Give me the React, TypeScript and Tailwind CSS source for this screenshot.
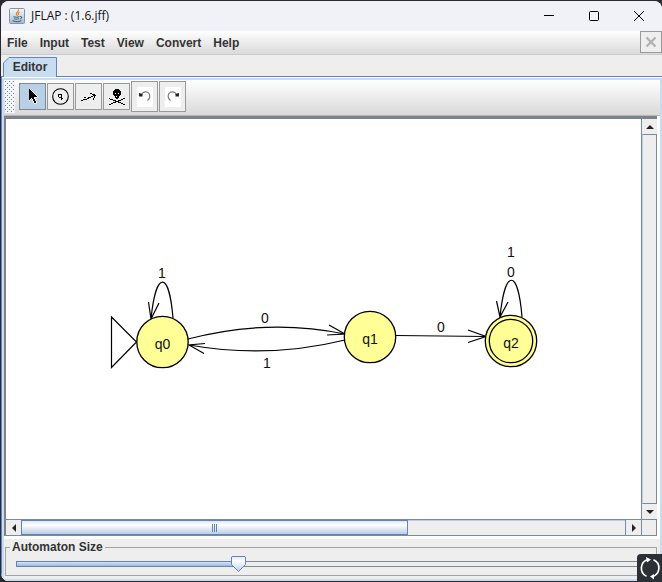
import { useState } from "react";
import type { ReactNode } from "react";

const MENUS = ["File", "Input", "Test", "View", "Convert", "Help"];

function PixelArt({ rows }: { rows: string[] }) {
  const width = Math.max(...rows.map((r) => r.length));
  return (
    <svg
      width={width}
      height={rows.length}
      viewBox={`0 0 ${width} ${rows.length}`}
      shapeRendering="crispEdges"
      aria-hidden="true"
    >
      {rows.flatMap((row, y) =>
        [...row].map((c, x) =>
          c === "." ? null : (
            <rect key={`${x}-${y}`} x={x} y={y} width={1} height={1} fill={c === "w" ? "#fff" : "#000"} />
          ),
        ),
      )}
    </svg>
  );
}

const CURSOR = [
  "..#w.......",
  "..##w......",
  "..###w.....",
  "..####w....",
  "..#####w...",
  "..######w..",
  "..#######w.",
  "..########w",
  "..#####www.",
  "..##w##w...",
  "..#w.w##w..",
  "..w..w##w..",
  "......w##w.",
  "......w##w.",
  ".......ww..",
];

const ARROW = [
  ".........##....",
  "...........###.",
  "............###",
  "..........##.#.",
  "...##..###...#.",
  "......##....#..",
  "..####......#..",
  "##.............",
];

const SKULL = [
  "......####......",
  ".....######.....",
  "....########....",
  "....########....",
  "....##.##.##....",
  "....########....",
  ".....######.....",
  "......#.##......",
  "......####......",
  "#......##.....##",
  ".###........##..",
  "....###..###....",
  "......####......",
  "....###..###....",
  "..##........##..",
  "##............##",
];

function ToolButton({ label, active = false, tall = false, children }: { label: string; active?: boolean; tall?: boolean; children: ReactNode }) {
  return (
    <button
      type="button"
      aria-label={label}
      aria-pressed={active}
      className={`flex w-[27px] items-center justify-center border ${tall ? "h-[31px]" : "h-[27px]"} ${
        active ? "border-[#7a8a99] bg-[#b8cfe5]" : "border-[#999999] bg-[#eeeeee]"
      }`}
    >
      {children}
    </button>
  );
}

function TurnIcon({ flip = false }: { flip?: boolean }) {
  return (
    <svg width="16" height="20" viewBox="0 0 16 20" className={flip ? "-scale-x-100" : ""} aria-hidden="true">
      <rect width="16" height="20" fill="#fff" />
      <path d="M4.500 7.500C6 4.500 10 4 12 6.500C13.500 9 13 11.500 10.500 13.500" fill="none" stroke="#777" strokeWidth="1.200" />
      <path d="M2 6L5.500 7V9.500H2z" fill="#222" />
    </svg>
  );
}

function TitleBar() {
  return (
    <header className="flex h-[30px] shrink-0 items-center bg-[#f1f2f8] pl-2">
      <svg width="16" height="16" viewBox="0 0 16 16" aria-hidden="true">
        <defs>
          <linearGradient id="cupTile" x1="0" y1="0" x2="0" y2="1">
            <stop offset="0" stopColor="#f6f8fa" />
            <stop offset="1" stopColor="#a9bac8" />
          </linearGradient>
        </defs>
        <rect x="0.5" y="0.5" width="15" height="15" rx="1" fill="url(#cupTile)" stroke="#8095a8" />
        <path d="M9.500 1.500C10 3.500 6.500 4.500 7.500 6.500L8.500 8M10.500 4C8.500 5 9 6 9.500 7" fill="none" stroke="#e8812c" strokeWidth="1.200" />
        <path d="M4.500 8.500C6 9.300 9 9.300 10.500 8.500M5 10.500C6.500 11.300 8.500 11.300 10 10.500M11 8.500C13.500 8 13 10.500 11 11M3.500 12.500C6 14 10.500 14 12.500 12.500" fill="none" stroke="#4d7596" strokeWidth="1.100" />
      </svg>
      <h1 className="ml-1.5 flex-1 font-['Open_Sans','Noto_Sans',sans-serif] text-[12px] leading-4 text-[#111]">JFLAP : (1.6.jff)</h1>
      <button type="button" aria-label="Minimize" className="flex h-full w-[45px] items-center justify-center">
        <svg width="10" height="10" aria-hidden="true"><path d="M0 4.500H10" stroke="#000" /></svg>
      </button>
      <button type="button" aria-label="Maximize" className="flex h-full w-[45px] items-center justify-center">
        <svg width="10" height="10" aria-hidden="true"><rect x="0.5" y="0.5" width="9" height="9" rx="1" fill="none" stroke="#000" /></svg>
      </button>
      <button type="button" aria-label="Close" className="flex h-full w-[46px] items-center justify-center">
        <svg width="10" height="10" aria-hidden="true"><path d="M0 0L10 10M10 0L0 10" stroke="#000" /></svg>
      </button>
    </header>
  );
}

function MenuBar() {
  return (
    <div className="flex h-6 shrink-0 items-start justify-between border-b border-[#cccccc] bg-linear-to-b from-white to-[#dadada]">
      <nav className="flex gap-3 pl-1.5">
        {MENUS.map((m) => (
          <button key={m} type="button" className="h-[23px] font-bold">{m}</button>
        ))}
      </nav>
      <button type="button" aria-label="Close tab" disabled className="flex h-[22px] w-[22px] items-center justify-center border border-[#999999] bg-[#eeeeee]">
        <svg width="12" height="12" aria-hidden="true"><path d="M1.500 1.500L10.500 10.500M10.500 1.500L1.500 10.500" stroke="#b0b0b0" strokeWidth="2.200" /></svg>
      </button>
    </div>
  );
}

function Toolbar() {
  return (
    <div role="toolbar" aria-label="Tools" className="flex h-[35px] shrink-0 items-center gap-px bg-linear-to-b from-white to-[#d9d9d9] pb-0.5">
      <svg className="mr-[3px] ml-px" width="10" height="32" shapeRendering="crispEdges" aria-hidden="true">
        <defs>
          <pattern id="grip" width="4" height="4" patternUnits="userSpaceOnUse">
            <rect width="4" height="4" fill="#f4f6f8" />
            <rect width="1" height="1" fill="#6f8296" />
            <rect x="2" y="2" width="1" height="1" fill="#6f8296" />
          </pattern>
        </defs>
        <rect width="10" height="32" fill="url(#grip)" />
      </svg>
      <ToolButton label="Attribute editor" active>
        <PixelArt rows={CURSOR} />
      </ToolButton>
      <ToolButton label="State creator">
        <svg width="17" height="17" viewBox="0 0 17 17" aria-hidden="true">
          <circle cx="8.500" cy="8.500" r="7.800" fill="none" stroke="#000" strokeWidth="1.100" />
          <path d="M6 6h4v1h-4zM6 7h1v2h-1zM9 7h1v5h-1zM7 9h2v1h-2zM10 10h1v1h-1z" fill="#000" shapeRendering="crispEdges" />
        </svg>
      </ToolButton>
      <ToolButton label="Transition creator">
        <PixelArt rows={ARROW} />
      </ToolButton>
      <ToolButton label="Deleter">
        <PixelArt rows={SKULL} />
      </ToolButton>
      <ToolButton label="Undo" tall><TurnIcon /></ToolButton>
      <ToolButton label="Redo" tall><TurnIcon flip /></ToolButton>
    </div>
  );
}

function StateNode({ x, y, name, final = false }: { x: number; y: number; name: string; final?: boolean }) {
  return (
    <g>
      <circle cx={x} cy={y} r="25.700" fill="#ffff96" stroke="#000" strokeWidth="1.300" />
      {final && <circle cx={x} cy={y} r="21.700" fill="none" stroke="#000" strokeWidth="1.300" />}
      <text x={x} y={y + 7} textAnchor="middle">{name}</text>
    </g>
  );
}

function Automaton() {
  return (
    <svg className="h-full w-full fill-[#111] font-['Liberation_Sans',Arial,sans-serif] text-[14px]" role="img" aria-label="State diagram">
      <g fill="none" stroke="#000" strokeWidth="1.200">
        <path d="M105.500 198V248.500L130.500 223Z" />
        <path d="M167 199C163 151 150 151 145 200M142.500 183L145 200L153 184" />
        <path d="M182 220Q262 199 339 215M323 206L339 215L321 216" />
        <path d="M339 221Q262 240 183 226M199 224.500L183 226L198 234.500" />
        <path d="M390 216.500L480 217.500M462 211L480 217.500L462 223.500" />
        <path d="M516 198C512 149 499 149 494 198M490.500 182L494 198L502 183" />
      </g>
      <StateNode x={156.5} y={223} name="q0" />
      <StateNode x={364} y={218} name="q1" />
      <StateNode x={505} y={222} name="q2" final />
      <g textAnchor="middle">
        <text x="156" y="159">1</text>
        <text x="259" y="204">0</text>
        <text x="261" y="249">1</text>
        <text x="435" y="213">0</text>
        <text x="505" y="138">1</text>
        <text x="505" y="158">0</text>
      </g>
    </svg>
  );
}

function ScrollArrow({ label, points }: { label: string; points: string }) {
  return (
    <button type="button" aria-label={label} className="flex size-[15px] shrink-0 items-center justify-center bg-[#eeeeee]">
      <svg width="8" height="8" aria-hidden="true"><polygon points={points} fill="#222" /></svg>
    </button>
  );
}

function Workspace() {
  return (
    <div className="mr-[3px] mb-[3px] grid min-h-0 flex-1 grid-cols-[1fr_15px] grid-rows-[1fr_16px] border-t-[3px] border-r border-b border-l-2 border-t-[#7b828a] border-r-[#7a8a99] border-b-[#7a8a99] border-l-[#7d8288]">
      <div className="min-h-0 overflow-hidden bg-white"><Automaton /></div>
      <div className="flex flex-col border-l border-[#7a8a99] bg-[#eeeeee]">
        <ScrollArrow label="Scroll up" points="0,6 4,2 8,6" />
        <div className="flex-1 border-y border-l border-y-[#7a8a99] border-l-[#b8cfe5]" />
        <ScrollArrow label="Scroll down" points="0,2 8,2 4,6" />
      </div>
      <div className="flex border-t border-[#7a8a99] bg-[#eeeeee]">
        <ScrollArrow label="Scroll left" points="6,0 2,4 6,8" />
        <div className="flex flex-1 border-r border-[#7a8a99] shadow-[inset_0_1px_0_#b8cfe5]">
          <div className="flex w-[64%] items-center justify-center gap-px border border-[#6382bf] bg-linear-to-b from-[#dce8f4] via-white via-30% to-[#b8cfe5]">
            <span className="h-2 w-px bg-[#6382bf]" />
            <span className="h-2 w-px bg-[#6382bf]" />
            <span className="h-2 w-px bg-[#6382bf]" />
          </div>
        </div>
        <ScrollArrow label="Scroll right" points="2,0 6,4 2,8" />
      </div>
      <div className="border-t border-l border-[#7a8a99] bg-[#eeeeee]" />
    </div>
  );
}

function SizePanel() {
  const [value, setValue] = useState(35);
  return (
    <div className="shrink-0 bg-[#eeeeee] pr-[3px] pb-[3px] pl-px">
      <fieldset className="h-[37px] border border-[#a3a3a3] pr-1.5 pl-2.5">
        <legend className="-ml-1.5 px-0.5 leading-4 font-bold">
          <label htmlFor="automaton-size">Automaton Size</label>
        </legend>
        <div className="relative h-4">
          <div className="absolute inset-x-0 top-1.5 h-1.5 border border-[#7a8a99] bg-[#eeeeee]" />
          <div
            className="absolute top-1.5 left-0 h-1.5 border border-[#6382bf] bg-linear-to-b from-[#d6e4f2] to-[#9db9da]"
            style={{ width: `${value}%` }}
          />
          <svg className="absolute top-px -ml-[7px]" style={{ left: `${value}%` }} width="15" height="16" aria-hidden="true">
            <defs>
              <linearGradient id="thumbFill" x1="0" y1="0" x2="0" y2="1">
                <stop offset="0" stopColor="#dce8f4" />
                <stop offset="0.3" stopColor="#fff" />
                <stop offset="1" stopColor="#b8cfe5" />
              </linearGradient>
            </defs>
            <path d="M1 0.500H14L14.500 1V8.500L7.500 15.500L0.500 8.500V1Z" fill="url(#thumbFill)" stroke="#6382bf" />
          </svg>
          <input
            id="automaton-size"
            type="range"
            min={0}
            max={100}
            value={value}
            onChange={(e) => setValue(Number(e.target.value))}
            className="absolute inset-0 h-full w-full opacity-0"
          />
        </div>
      </fieldset>
    </div>
  );
}

export default function App() {
  return (
    <div className="relative h-screen min-h-80 overflow-hidden bg-[#2a2b31] py-px pl-px font-['Liberation_Sans',Arial,sans-serif] text-[12px] text-[#333333]">
      <div className="flex h-full flex-col overflow-hidden rounded-lg bg-[#eeeeee]">
        <TitleBar />
        <MenuBar />
        <div role="tablist" className="flex h-[21px] shrink-0 items-end pl-0.5">
          <button type="button" role="tab" aria-selected="true" className="relative z-10 h-[19px] w-[54px] font-bold">
            <svg className="absolute inset-0 -z-10" width="54" height="20" aria-hidden="true">
              <path d="M0.500 20V6L6 0.500H53.500V20" fill="#c8ddf2" stroke="#6382bf" />
            </svg>
            Editor
          </button>
        </div>
        <main className="flex min-h-0 flex-1 flex-col border-t border-l border-[#6382bf] bg-white pt-px">
          <div className="flex min-h-0 flex-1 flex-col border-2 border-[#c8ddf2] bg-white">
            <Toolbar />
            <div className="h-px shrink-0 bg-[#b5b5b5]" />
            <Workspace />
            <SizePanel />
          </div>
        </main>
      </div>
      <button type="button" aria-label="Refresh" className="absolute right-0 bottom-0 flex h-7 w-[25px] items-center justify-center rounded-tl bg-[#2b2f36]">
        <svg width="22" height="24" viewBox="0 0 22 24" fill="none" aria-hidden="true">
          <path d="M9 3.500A9 9 0 0 0 7.500 20.300M13 20.700A9 9 0 0 0 14.500 3.700" stroke="#fff" strokeWidth="1.700" />
          <path d="M7 1L12 3.500L8 6.500ZM15 18L11 20.500L15 23.500Z" fill="#fff" />
        </svg>
      </button>
    </div>
  );
}
